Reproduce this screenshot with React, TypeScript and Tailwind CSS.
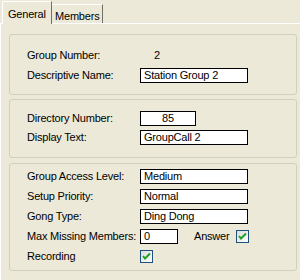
import React from 'react';

const Field: React.FC<{ value: string; w: string; center?: boolean }> = ({ value, w, center }) => (
    <div className={`${w} h-[15px] border border-black bg-white leading-[13px] ${center ? 'text-center' : 'pl-[3px]'}`}>
        {value}
    </div>
);

const Check: React.FC = () => (
    <div className="w-[13px] h-[13px] border border-[#1C5180] bg-gradient-to-br from-[#DCDCD7] to-white flex items-center justify-center">
        <svg width="11" height="11" viewBox="0 0 11 11">
            <path d="M2 5 L4 7.5 L9 2.5" fill="none" stroke="#21A121" strokeWidth="2" />
        </svg>
    </div>
);

const Row: React.FC<{ label: string; h?: string; children: React.ReactNode }> = ({ label, h = 'h-[20px]', children }) => (
    <div className={`flex items-center ${h}`}>
        <div className="w-[113px] shrink-0">{label}</div>
        {children}
    </div>
);

const GroupBox: React.FC<{ className: string; children: React.ReactNode }> = ({ className, children }) => (
    <div className={`ml-[8px] w-[288px] border border-[#D0D0BF] rounded-[3px] pl-[17px] ${className}`}>
        {children}
    </div>
);

const App: React.FC = () => {
    return (
        <div className="w-[300px] h-[280px] bg-[#ECE9D8] overflow-hidden text-black text-[11px] font-['Liberation_Sans',sans-serif] tracking-[-0.2px]">
            {/* Tabs */}
            <div className="flex items-end h-[23px] pl-[2px]">
                <div className="w-[50px] h-[22px] border-l border-t border-white border-r border-r-[#716F64] rounded-tl-[2px] pl-[5px] pt-[4px] relative z-10 bg-[#ECE9D8] -mb-[1px] h-[23px]">
                    General
                </div>
                <div className="w-[51px] h-[19px] border-t border-white border-r border-r-[#716F64] pl-[3px] pt-[3px]">
                    Members
                </div>
            </div>

            {/* Page */}
            <div className="border-t border-l border-white h-[257px] pt-[10px]">
                <GroupBox className="pt-[10px] pb-[9px]">
                    <Row label="Group Number:">
                        <span className="ml-[14px]">2</span>
                    </Row>
                    <Row label="Descriptive Name:">
                        <Field value="Station Group 2" w="w-[108px]" />
                    </Row>
                </GroupBox>

                <GroupBox className="mt-[4px] pt-[9px] pb-[10px]">
                    <Row label="Directory Number:" h="h-[19px]">
                        <Field value="85" w="w-[56px]" center />
                    </Row>
                    <Row label="Display Text:" h="h-[19px]">
                        <Field value="GroupCall 2" w="w-[108px]" />
                    </Row>
                </GroupBox>

                <GroupBox className="mt-[5px] pt-[2px] pb-[4px]">
                    <Row label="Group Access Level:">
                        <Field value="Medium" w="w-[108px]" />
                    </Row>
                    <Row label="Setup Priority:">
                        <Field value="Normal" w="w-[108px]" />
                    </Row>
                    <Row label="Gong Type:">
                        <Field value="Ding Dong" w="w-[108px]" />
                    </Row>
                    <Row label="Max Missing Members:">
                        <Field value="0" w="w-[38px]" />
                        <span className="ml-[16px]">Answer</span>
                        <div className="ml-[7px]">
                            <Check />
                        </div>
                    </Row>
                    <Row label="Recording">
                        <Check />
                    </Row>
                </GroupBox>
            </div>
        </div>
    );
};

export default App;
